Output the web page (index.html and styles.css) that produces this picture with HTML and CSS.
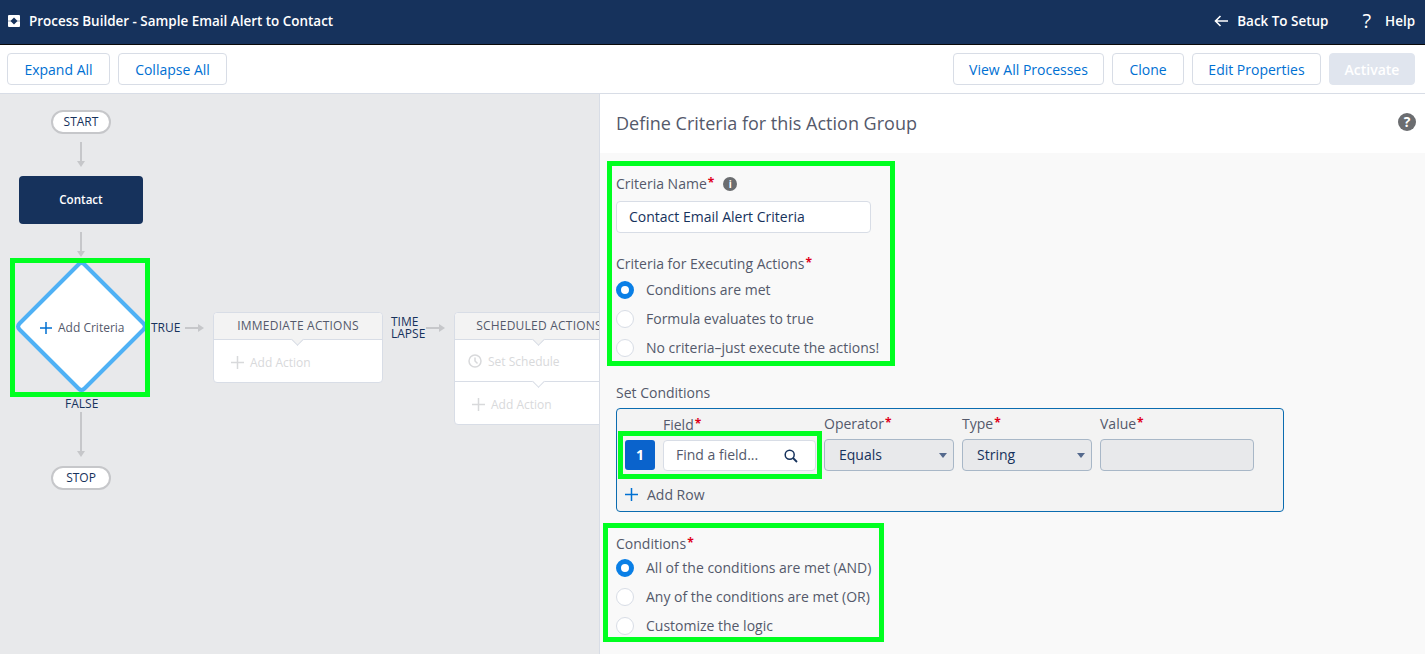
FILE: index.html
```html
<!DOCTYPE html>
<html lang="en">
<head>
<meta charset="utf-8">
<title>Process Builder</title>
<link rel="stylesheet" href="styles.css">
</head>
<body>
<header class="topbar">
  <div class="topbar-left">
    <svg class="app-icon" width="12" height="12" viewBox="0 0 12 12"><rect width="12" height="12" rx="1" fill="#fff"/><path d="M0 5.500h12v1H0z" fill="#9aa6b8"/><path d="M6 2.500 9.500 6 6 9.500 2.500 6z" fill="#16325c"/></svg>
    <span>Process Builder - Sample Email Alert to Contact</span>
  </div>
  <nav class="topbar-right">
    <a class="toplink back"><svg width="14" height="12" viewBox="0 0 14 12"><path d="M14 6H1.500M6.500 1l-5 5 5 5" fill="none" stroke="#fff" stroke-width="1.600"/></svg>Back To Setup</a>
    <a class="toplink"><span class="q">?</span>Help</a>
  </nav>
</header>
<div class="toolbar">
  <div class="btn-group">
    <button class="btn w-expand">Expand All</button>
    <button class="btn w-collapse">Collapse All</button>
  </div>
  <div class="btn-group">
    <button class="btn w-view">View All Processes</button>
    <button class="btn w-clone">Clone</button>
    <button class="btn w-edit">Edit Properties</button>
    <button class="btn btn-disabled w-activate">Activate</button>
  </div>
</div>
<main class="workspace">
  <section class="canvas">
    <div class="pill pill-start">START</div>
    <svg class="arrow arrow-a" width="10" height="26" viewBox="0 0 10 26"><path d="M5 0v20" stroke="#c6c7ca" stroke-width="2"/><path d="M1 19h8l-4 6z" fill="#c6c7ca"/></svg>
    <div class="contact">Contact</div>
    <svg class="arrow arrow-b" width="10" height="26" viewBox="0 0 10 26"><path d="M5 0v20" stroke="#c6c7ca" stroke-width="2"/><path d="M1 19h8l-4 6z" fill="#c6c7ca"/></svg>
    <svg class="diamond" width="140" height="139" viewBox="0 0 140 139"><path d="M67.500 6.500q3-3 6 0l59 59q3 3 0 6l-59 59q-3 3-6 0l-59-59q-3-3 0-6z" fill="#fff" stroke="#4fb1f5" stroke-width="4"/></svg>
    <div class="diamond-label"><svg width="12" height="12" viewBox="0 0 12 12"><path d="M6 0v12M0 6h12" stroke="#0070d2" stroke-width="1.500"/></svg><span>Add Criteria</span></div>
    <div class="green-frame frame-diamond"></div>
    <span class="flow-label label-true">TRUE</span>
    <svg class="arrow arrow-c" width="20" height="10" viewBox="0 0 20 10"><path d="M0 5h14" stroke="#c6c7ca" stroke-width="2"/><path d="M13 1v8l6-4z" fill="#c6c7ca"/></svg>
    <span class="flow-label label-false">FALSE</span>
    <svg class="arrow arrow-d" width="10" height="46" viewBox="0 0 10 46"><path d="M5 0v40" stroke="#c6c7ca" stroke-width="2"/><path d="M1 39h8l-4 6z" fill="#c6c7ca"/></svg>
    <div class="pill pill-stop">STOP</div>

    <div class="card card-immediate">
      <div class="card-head">IMMEDIATE ACTIONS</div>
      <div class="card-row"><svg width="13" height="13" viewBox="0 0 13 13"><path d="M6.500 0v13M0 6.500h13" stroke="#d8d9db" stroke-width="1.500"/></svg>Add Action</div>
    </div>
    <span class="flow-label label-time">TIME<br>LAPSE</span>
    <svg class="arrow arrow-e" width="20" height="10" viewBox="0 0 20 10"><path d="M0 5h14" stroke="#c6c7ca" stroke-width="2"/><path d="M13 1v8l6-4z" fill="#c6c7ca"/></svg>
    <div class="card card-scheduled">
      <div class="card-head">SCHEDULED ACTIONS</div>
      <div class="card-row row-schedule"><svg width="14" height="14" viewBox="0 0 14 14"><circle cx="7" cy="7" r="6" fill="none" stroke="#d8d9db" stroke-width="1.500"/><path d="M7 3.500V7l2.500 2.500" fill="none" stroke="#d8d9db" stroke-width="1.500"/></svg>Set Schedule</div>
      <div class="card-row row-divided"><svg width="13" height="13" viewBox="0 0 13 13"><path d="M6.500 0v13M0 6.500h13" stroke="#d8d9db" stroke-width="1.500"/></svg>Add Action</div>
    </div>
  </section>

  <aside class="panel">
    <div class="panel-head">
      <h1>Define Criteria for this Action Group</h1>
      <svg class="help-icon" width="18" height="18" viewBox="0 0 18 18"><circle cx="9" cy="9" r="9" fill="#6b6d70"/><text x="9" y="14" text-anchor="middle" class="help-glyph">?</text></svg>
    </div>
    <div class="panel-body">
      <div class="green-box box-criteria">
        <div class="field-label">Criteria Name<i>*</i><span class="info">i</span></div>
        <div class="text-input">Contact Email Alert Criteria</div>
        <div class="field-label label-exec">Criteria for Executing Actions<i>*</i></div>
        <div class="radio on"><b></b>Conditions are met</div>
        <div class="radio"><b></b>Formula evaluates to true</div>
        <div class="radio"><b></b>No criteria–just execute the actions!</div>
      </div>
      <div class="field-label label-set">Set Conditions</div>
      <div class="conditions">
        <div class="cond-row">
          <div class="badge">1</div>
          <div class="cond-col col-field">
            <div class="field-label">Field<i>*</i></div>
            <div class="find"><span>Find a field...</span><svg width="14" height="14" viewBox="0 0 14 14"><circle cx="5.700" cy="5.700" r="4.500" fill="none" stroke="#16325c" stroke-width="1.500"/><path d="m9 9 4 4" stroke="#16325c" stroke-width="1.800"/></svg></div>
          </div>
          <div class="cond-col col-op">
            <div class="field-label">Operator<i>*</i></div>
            <div class="select">Equals<em></em></div>
          </div>
          <div class="cond-col col-type">
            <div class="field-label">Type<i>*</i></div>
            <div class="select">String<em></em></div>
          </div>
          <div class="cond-col col-value">
            <div class="field-label">Value<i>*</i></div>
            <div class="select"></div>
          </div>
        </div>
        <div class="add-row"><svg width="13" height="13" viewBox="0 0 13 13"><path d="M6.500 0v13M0 6.500h13" stroke="#0070d2" stroke-width="1.500"/></svg>Add Row</div>
        <div class="green-frame frame-field"></div>
      </div>
      <div class="green-box box-logic">
        <div class="field-label label-logic">Conditions<i>*</i></div>
        <div class="radio on"><b></b>All of the conditions are met (AND)</div>
        <div class="radio"><b></b>Any of the conditions are met (OR)</div>
        <div class="radio"><b></b>Customize the logic</div>
      </div>
    </div>
  </aside>
</main>
</body>
</html>
```
FILE: styles.css
```css
* { box-sizing: border-box; }
html, body { margin: 0; height: 654px; overflow: hidden; }
body { font-family: "Open Sans", "Liberation Sans", sans-serif; font-size: 14px; color: #54698d; background: #fff; }

.topbar { height: 45px; background: #16325c; border-bottom: 1px solid #0a0a0a; color: #fff; display: flex; justify-content: space-between; align-items: center; padding: 0 10px 3px 8px; }
.topbar-left { display: flex; align-items: center; gap: 9px; font-size: 13.45px; font-weight: 600; }
.topbar-right { display: flex; align-items: center; gap: 34px; font-size: 13.45px; font-weight: 600; }
.toplink { display: flex; align-items: center; }
.back svg { margin-right: 9px; }
.q { font-size: 20px; line-height: 20px; font-weight: 500; margin-right: 14px; }

.toolbar { height: 49px; background: #fff; border-bottom: 1px solid #d8dde6; display: flex; justify-content: space-between; align-items: center; padding: 0 10px 0 7px; }
.btn-group { display: flex; gap: 8px; }
.btn { height: 32px; background: #fff; border: 1px solid #d8dde6; border-radius: 4px; color: #0070d2; font: 14px "Open Sans", "Liberation Sans", sans-serif; padding: 0; }
.btn-disabled { background: #e0e5ee; border-color: #e0e5ee; color: #fff; font-weight: 600; }
.w-expand { width: 103px; } .w-collapse { width: 109px; } .w-view { width: 151px; } .w-clone { width: 72px; } .w-edit { width: 129px; } .w-activate { width: 86px; }

.workspace { display: flex; height: 560px; }
.canvas { position: relative; width: 599px; background: #e8e9eb; overflow: hidden; color: #16325c; }
.panel { width: 826px; background: #f9f9f9; border-left: 1px solid #d8dde6; }

.pill { position: absolute; left: 51px; width: 60px; height: 24px; border: 2px solid #c6c7ca; border-radius: 12px; background: #fff; font-size: 12px; line-height: 20px; text-align: center; }
.pill-start { top: 16px; }
.pill-stop { top: 372px; }
.arrow { position: absolute; display: block; }
.arrow-a { left: 76px; top: 48px; }
.arrow-b { left: 76px; top: 138px; }
.arrow-c { left: 185px; top: 229px; }
.arrow-d { left: 76px; top: 318px; }
.arrow-e { left: 426px; top: 229px; }
.contact { position: absolute; left: 19px; top: 82px; width: 124px; height: 48px; background: #16325c; border-radius: 4px; color: #fff; font-size: 11.6px; font-weight: 600; line-height: 48px; text-align: center; }
.diamond { position: absolute; left: 10.500px; top: 164px; }
.diamond-label { position: absolute; left: 40px; top: 225px; display: flex; align-items: center; gap: 6px; font-size: 12px; color: #54596b; line-height: 18px; }
.green-frame { position: absolute; border: 5px solid #00ff20; pointer-events: none; }
.frame-diamond { left: 10px; top: 164px; width: 140px; height: 139px; }
.flow-label { position: absolute; font-size: 12px; line-height: 12px; }
.label-true { left: 151px; top: 228px; }
.label-false { left: 65px; top: 304px; }
.label-time { left: 391px; top: 222px; }

.card { position: absolute; width: 170px; background: #fff; border: 1px solid #d8dde6; border-radius: 4px; }
.card-immediate { left: 213px; top: 218px; height: 71px; }
.card-scheduled { left: 454px; top: 218px; height: 113px; }
.card-head { position: relative; height: 27px; background: #f3f3f3; border-bottom: 1px solid #d8dde6; border-radius: 4px 4px 0 0; color: #54596b; font-size: 12px; letter-spacing: .22px; line-height: 26px; text-align: center; }
.card-head::after { content: ""; position: absolute; left: 79px; bottom: -5px; width: 8px; height: 8px; border-right: 1px solid #d8dde6; border-bottom: 1px solid #d8dde6; transform: rotate(45deg); background: #f3f3f3; }
.card-row { height: 42px; padding-top: 2px; display: flex; align-items: center; gap: 6px; padding-left: 17px; color: #d8d9db; font-size: 12px; }
.row-schedule { height: 41px; padding-top: 1px; padding-left: 13px; }
.row-divided { position: relative; padding-top: 3px; border-top: 1px solid #d8dde6; }
.row-divided::before { content: ""; position: absolute; left: 79px; top: -5px; width: 8px; height: 8px; background: #fff; border-right: 1px solid #d8dde6; border-bottom: 1px solid #d8dde6; transform: rotate(45deg); }

.panel-head { height: 59px; background: #fff; display: flex; justify-content: space-between; align-items: center; padding: 0 9px 2px 16px; }
.panel-head h1 { margin: 0; font-size: 18px; font-weight: 400; color: #54596b; }
.help-icon { margin-bottom: 2px; }
.help-glyph { fill: #fff; font-size: 14px; font-weight: 700; }
.panel-body { padding-top: 8px; }

.green-box { border: 5px solid #00ff20; }
.box-criteria { margin-left: 7px; width: 288px; height: 205px; padding: 8px 0 0 4px; }
.box-logic { margin: 11px 0 0 3px; width: 281px; height: 119px; padding: 6px 0 0 8px; }
.field-label { font-size: 14px; line-height: 20px; color: #54596b; display: flex; align-items: center; }
.field-label i { color: #e0001b; font-style: normal; font-weight: 700; margin-left: 1px; font-size: 12px; line-height: 14px; align-self: flex-start; padding-top: 2px; }
.info { width: 14px; height: 14px; border-radius: 50%; background: #6b6d70; color: #fff; font-size: 10px; font-weight: 700; line-height: 14px; text-align: center; margin-left: 9px; }
.text-input { margin-top: 7px; width: 255px; height: 32px; background: #fff; border: 1px solid #d8dde6; border-radius: 4px; padding-left: 12px; line-height: 30px; color: #16325c; }
.label-exec { margin: 21px 0 1px; }
.label-logic { margin-bottom: -1px; }
.radio { height: 29px; display: flex; align-items: center; color: #54596b; }
.radio b { width: 18px; height: 18px; border: 1px solid #d8dde6; border-radius: 50%; background: #fff; margin-right: 12px; flex: none; }
.radio.on b { border: 5px solid #0a7fe6; background: #fff; }
.label-set { margin: 17px 0 0 16px; }
.conditions { position: relative; margin: 5px 0 0 16px; width: 668px; height: 104px; background: #f3f3f3; border: 1px solid #0b6cb0; border-radius: 4px; padding: 5px 0 0 8px; }
.cond-row { display: flex; align-items: flex-end; }
.badge { width: 30px; height: 30px; margin: 0 8px 1px 0; background: #0a63cc; border-radius: 3px; color: #fff; font-weight: 700; line-height: 30px; text-align: center; }
.cond-col .field-label { margin-bottom: 5px; }
.col-field { width: 153px; margin-right: 8px; }
.col-op { width: 130px; margin-right: 8px; }
.col-type { width: 130px; margin-right: 8px; }
.col-value { width: 154px; }
.find { height: 31px; background: #fff; border: 1px solid #d8dde6; border-radius: 4px; display: flex; justify-content: space-between; align-items: center; padding: 0 17px 2px 12px; }
.find svg { margin-top: 2px; }
.find span { color: #54596b; }
.select { position: relative; height: 32px; background: #e8e9eb; border: 1px solid #a8b7c7; border-radius: 4px; padding-left: 14px; line-height: 30px; color: #16325c; }
.select em { position: absolute; right: 6px; top: 13px; border: 4px solid transparent; border-top: 5px solid #54698d; border-bottom: 0; }
.add-row { display: flex; align-items: center; gap: 9px; margin-top: 14px; color: #54596b; }
.frame-field { left: 1px; top: 22px; width: 204px; height: 48px; }
```
